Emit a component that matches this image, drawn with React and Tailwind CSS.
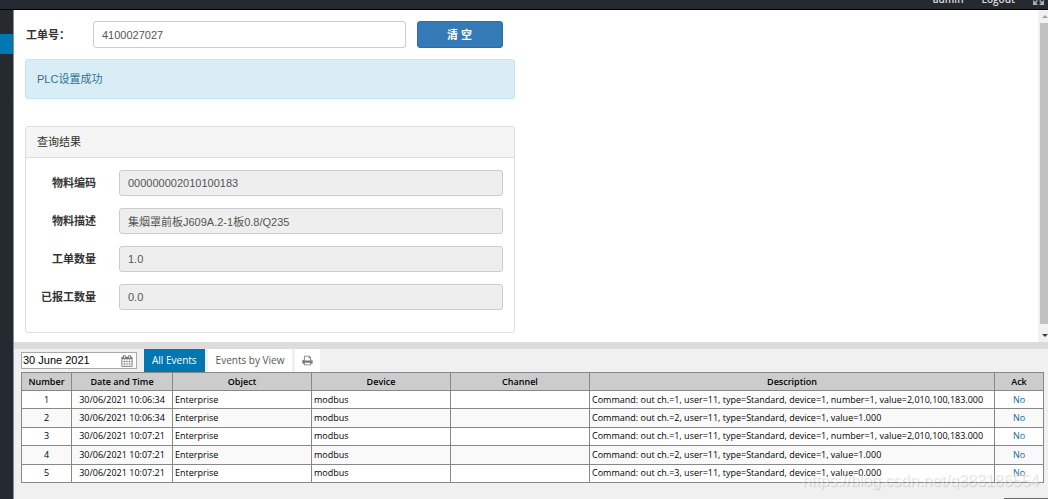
import React, { useState } from 'react';

const events = [
    { id: 1, time: '30/06/2021 10:06:34', text: 'Command: out ch.=1, user=11, type=Standard, device=1, number=1, value=2,010,100,183.000' },
    { id: 2, time: '30/06/2021 10:06:34', text: 'Command: out ch.=2, user=11, type=Standard, device=1, value=1.000' },
    { id: 3, time: '30/06/2021 10:07:21', text: 'Command: out ch.=1, user=11, type=Standard, device=1, number=1, value=2,010,100,183.000' },
    { id: 4, time: '30/06/2021 10:07:21', text: 'Command: out ch.=2, user=11, type=Standard, device=1, value=1.000' },
    { id: 5, time: '30/06/2021 10:07:21', text: 'Command: out ch.=3, user=11, type=Standard, device=1, value=0.000' },
];

const fields = [
    { id: 'code', label: '物料编码', value: '000000002010100183' },
    { id: 'desc', label: '物料描述', value: '集烟罩前板J609A.2-1板0.8/Q235' },
    { id: 'count', label: '工单数量', value: '1.0' },
    { id: 'reported', label: '已报工数量', value: '0.0' },
];

const CalendarIcon = () => (
    <svg viewBox="0 0 1792 1792" className="w-3 h-3 shrink-0" fill="#777777">
        <path d="M192 1664h288v-288h-288v288zm352 0h320v-288h-320v288zm-352-352h288v-320h-288v320zm352 0h320v-320h-320v320zm-352-384h288v-288h-288v288zm736 736h320v-288h-320v288zm-384-736h320v-288h-320v288zm768 736h288v-288h-288v288zm-384-352h320v-320h-320v320zm-352-864v-288q0-13-9.5-22.5t-22.5-9.5h-64q-13 0-22.5 9.5t-9.5 22.5v288q0 13 9.5 22.5t22.5 9.5h64q13 0 22.5-9.5t9.5-22.5zm736 864h288v-320h-288v320zm-384-384h320v-288h-320v288zm384 0h288v-288h-288v288zm32-480v-288q0-13-9.5-22.5t-22.5-9.5h-64q-13 0-22.5 9.5t-9.5 22.5v288q0 13 9.5 22.5t22.5 9.5h64q13 0 22.5-9.5t9.5-22.5zm384-64v1280q0 52-38 90t-90 38h-1408q-52 0-90-38t-38-90v-1280q0-52 38-90t90-38h128v-96q0-66 47-113t113-47h64q66 0 113 47t47 113v96h384v-96q0-66 47-113t113-47h64q66 0 113 47t47 113v96h128q52 0 90 38t38 90z" />
    </svg>
);

const PrintIcon = () => (
    <svg viewBox="0 0 1792 1792" className="w-[11px] h-[11px]" fill="#777777">
        <path d="M448 1536h896v-256h-896v256zm0-640h896v-384h-160q-40 0-68-28t-28-68v-160h-640v640zm1152 64q0-26-19-45t-45-19-45 19-19 45 19 45 45 19 45-19 19-45zm128 0v416q0 13-9.5 22.5t-22.5 9.5h-224v160q0 40-28 68t-68 28h-960q-40 0-68-28t-28-68v-160h-224q-13 0-22.5-9.5t-9.5-22.5v-416q0-79 56.5-135.5t135.5-56.5h64v-544q0-40 28-68t68-28h672q40 0 88 20t76 48l152 152q28 28 48 76t20 88v256h64q79 0 135.5 56.5t56.5 135.5z" />
    </svg>
);

const ExpandIcon = () => (
    <svg viewBox="0 0 10 10" className="block w-[11px] h-[11px]" fill="none" stroke="#b4b7ba" strokeWidth="1.3">
        <path d="M.7 4V.7H4M6 .7h3.3V4M9.3 6v3.3H6M4 9.3H.7V6M1 1l3 3M9 1L6 4M9 9L6 6M1 9l3-3" />
    </svg>
);

const TopBar = () => (
    <header className="h-[10px] overflow-hidden bg-[#252a31] border-b border-black flex items-end justify-end gap-[18px] pr-1 pb-[3px] text-[10px] leading-[14px] font-semibold text-[#dcdddf]">
        <a href="#admin">admin</a>
        <a href="#logout">Logout</a>
        <button type="button" aria-label="Full screen" className="pb-px"><ExpandIcon /></button>
    </header>
);

const OrderForm = () => {
    const [order, setOrder] = useState('4100027027');

    return (
        <section className="font-['Liberation_Sans','Noto_Sans_CJK_SC',sans-serif] text-[11px] leading-4 text-[#333333]">
            <form className="flex items-center pr-3" onSubmit={(e) => e.preventDefault()}>
                <label htmlFor="order" className="w-[68px] shrink-0 pl-px font-bold">工单号：</label>
                <input
                    id="order"
                    type="text"
                    value={order}
                    onChange={(e) => setOrder(e.target.value)}
                    className="flex-1 min-w-0 h-[27px] px-2 border border-[#cccccc] rounded-[3px] bg-white text-[#555555]"
                />
                <button type="button" onClick={() => setOrder('')} className="ml-[11px] w-[86px] h-[27px] rounded-[3px] border border-[#2e6da4] bg-[#337ab7] text-white font-bold">清 空</button>
            </form>

            <div role="status" className="mt-[11px] px-[11px] py-[11px] border border-[#bce8f1] rounded-[3px] bg-[#d9edf7] text-[#31708f]">
                <p className="leading-4">PLC设置成功</p>
            </div>

            <div className="mt-[27px] border border-[#dddddd] rounded-[3px] bg-white">
                <h2 className="px-[11px] py-[7px] leading-4 border-b border-[#dddddd] bg-[#f5f5f5] rounded-t-[3px]">查询结果</h2>
                <div className="flex flex-col gap-3 pt-3 pb-[22px] pr-[11px]">
                    {fields.map((f) => (
                        <div key={f.id} className="flex items-center">
                            <label htmlFor={f.id} className="w-[93px] shrink-0 pr-[23px] text-right font-bold whitespace-nowrap">{f.label}</label>
                            <input id={f.id} type="text" readOnly value={f.value} className="flex-1 min-w-0 h-[26px] px-2 border border-[#cccccc] rounded-[3px] bg-[#eeeeee] text-[#555555]" />
                        </div>
                    ))}
                </div>
            </div>
        </section>
    );
};

const EventPanel = () => {
    const [date, setDate] = useState('30 June 2021');

    return (
        <section className="flex-1 pl-[7px] pr-1 bg-[#f0f0f0]">
            <div className="flex items-center">
                <div className="flex items-center w-[116px] h-[17px] px-px pr-[3px] border border-[#a9a9a9] bg-white">
                    <input aria-label="Date" type="text" value={date} onChange={(e) => setDate(e.target.value)} className="flex-1 min-w-0 font-['Liberation_Sans',sans-serif] text-[11px] leading-[15px] text-black" />
                    <CalendarIcon />
                </div>
                <button type="button" className="ml-[7px] h-[23px] px-2 bg-[#0077b0] text-[10px] text-white">All Events</button>
                <button type="button" className="ml-[3px] h-[23px] px-2 bg-white text-[10px] text-[#555555]">Events by View</button>
                <button type="button" aria-label="Print" className="ml-[3px] h-[23px] px-[7px] bg-white"><PrintIcon /></button>
            </div>

            <table className="w-full h-[111px] table-fixed border-collapse bg-white text-[9px] leading-[12px] text-black">
                <colgroup>
                    <col className="w-[50px]" />
                    <col className="w-[101px]" />
                    <col className="w-[139px]" />
                    <col className="w-[139px]" />
                    <col className="w-[139px]" />
                    <col />
                    <col className="w-[49px]" />
                </colgroup>
                <thead>
                    <tr className="h-[18px] bg-[#cccccc]">
                        {['Number', 'Date and Time', 'Object', 'Device', 'Channel', 'Description', 'Ack'].map((h) => (
                            <th key={h} scope="col" className="border border-[#888888] font-semibold">{h}</th>
                        ))}
                    </tr>
                </thead>
                <tbody>
                    {events.map((ev) => (
                        <tr key={ev.id} className="even:bg-[#f9f9f9]">
                            <td className="border border-[#888888] text-center">{ev.id}</td>
                            <td className="border border-[#888888] text-center whitespace-nowrap">{ev.time}</td>
                            <td className="border border-[#888888] px-[2px]">Enterprise</td>
                            <td className="border border-[#888888] px-[2px]">modbus</td>
                            <td className="border border-[#888888]"></td>
                            <td className="border border-[#888888] px-[2px] whitespace-nowrap">{ev.text}</td>
                            <td className="border border-[#888888] text-center"><a href="#ack" className="text-[#0f6a9a]">No</a></td>
                        </tr>
                    ))}
                </tbody>
            </table>
        </section>
    );
};

const App = () => {
    return (
        <div className="relative min-h-screen flex flex-col bg-[#252a31] font-['Open_Sans','Noto_Sans',sans-serif]">
            <TopBar />
            <div className="flex-1 flex">
                <nav className="w-[13px] shrink-0 pt-6">
                    <a href="#table" aria-label="Table view" className="block h-5 bg-[#0077b0]"></a>
                </nav>
                <main className="flex-1 min-w-0 flex flex-col border-l border-[#8b8d90]">
                    <div className="flex bg-white">
                        <div className="flex-1 grid grid-cols-2 gap-x-[34px] pl-[11px] pt-[11px] pb-[9px]">
                            <OrderForm />
                        </div>
                        {/* scroll track */}
                        <div className="w-[10px] pl-[2px] flex flex-col bg-[#f1f1f1]">
                            <svg viewBox="0 0 8 13" className="w-2 h-[13px]" fill="#a3a3a3"><path d="M2 8l3-3 3 3z" /></svg>
                            <div className="flex-1 bg-[#c1c1c1]"></div>
                            <svg viewBox="0 0 8 18" className="w-2 h-[18px]" fill="#404040"><path d="M2 10h6l-3 3z" /></svg>
                        </div>
                    </div>
                    <div className="h-[7px] bg-[#dcdcdc]"></div>
                    <EventPanel />
                </main>
            </div>
            <p className="absolute right-[9px] bottom-2 font-['Liberation_Sans',sans-serif] text-base leading-5 text-white/50 [text-shadow:1px_1px_1px_rgba(0,0,0,0.15)]">https://blog.csdn.net/q383186554</p>
            <div className="absolute right-0 bottom-0 w-11 h-px bg-[#666666]"></div>
        </div>
    );
};

export default App;
